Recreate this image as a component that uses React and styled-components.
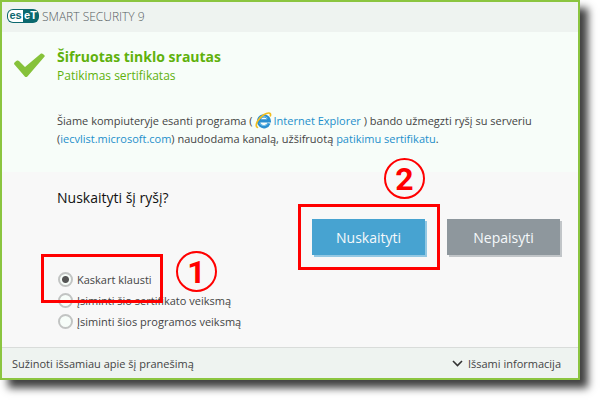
import React, { useState } from 'react'
import styled, { createGlobalStyle } from 'styled-components'

const GlobalStyle = createGlobalStyle`
  * {
    box-sizing: border-box;
  }
  body {
    margin: 0;
    background: #ffffff;
    font-family: 'Open Sans', 'Noto Sans', sans-serif;
    font-size: 11px;
    color: #444444;
  }
`;

const Page = styled.div`
  padding: 0 20px 20px 0;
`;

const Dialog = styled.main`
  border: 2px solid #8bc540;
  background: #f8f8f8;
  box-shadow: 8px 8px 8px rgba(0, 0, 0, 0.75);
`;

const Header = styled.header`
  display: flex;
  align-items: center;
  gap: 3px;
  height: 30px;
  padding: 0 5px 2px;
  background: #eef3f0;
`;

const Logo = styled.span`
  display: flex;
  width: 32px;
  height: 14px;
  padding: 1px;
  overflow: hidden;
  border-radius: 6px;
  background: #0b686e;
  font-family: 'Liberation Sans', sans-serif;
  font-size: 11px;
  font-weight: bold;
  line-height: 11px;
`;

const LogoHalf = styled.span`
  flex: 1;
  border-radius: ${props => props.$light ? '5px 0 0 5px' : '0 5px 5px 0'};
  background: ${props => props.$light ? '#ffffff' : '#0b686e'};
  color: ${props => props.$light ? '#0b686e' : '#ffffff'};
  text-align: center;
`;

const Product = styled.span`
  font-size: 12px;
  font-weight: 300;
  color: #555c60;
`;

const Notice = styled.section`
  display: flex;
  align-items: flex-start;
  gap: 12px;
  min-height: 140px;
  padding: 15px 20px 22px 12px;
  background: #f7fdf9;
`;

const Tick = styled.svg`
  flex: none;
  margin-top: 6px;
`;

const Title = styled.h1`
  margin: 0;
  font-size: 14px;
  line-height: 20px;
  font-weight: bold;
  color: #5fb10c;
`;

const Subtitle = styled.p`
  margin: 0 0 27px;
  font-size: 12px;
  line-height: 18px;
  color: #5fb10c;
`;

const Message = styled.p`
  margin: 0;
  line-height: 18px;
`;

const Link = styled.a`
  color: #1d8fcb;
  text-decoration: none;
`;

const BrowserIcon = styled.svg`
  margin: 0 2px;
  vertical-align: -4px;
`;

const Ask = styled.section`
  display: grid;
  grid-template-columns: 1fr auto;
  align-content: space-between;
  min-height: 175px;
  padding: 15px 18px 15px 55px;
`;

const Question = styled.h2`
  margin: 0;
  font-size: 14px;
  line-height: 22px;
  font-weight: normal;
  color: #111111;
`;

const Actions = styled.div`
  display: flex;
  gap: 22px;
  padding-top: 32px;
`;

const Marked = styled.div`
  position: relative;
`;

const Action = styled.button`
  width: 113px;
  height: 36px;
  padding: 0;
  border: none;
  background: ${props => props.$primary ? '#47a3d1' : '#8e979d'};
  box-shadow: 2px 2px 0 ${props => props.$primary ? '#93c8e3' : '#c1c5c8'};
  font-family: inherit;
  font-size: 14px;
  color: #f5f9fb;
  cursor: pointer;
`;

const Options = styled.fieldset`
  margin: 0;
  padding: 0 0 0 1px;
  border: none;
`;

const Option = styled.label`
  display: flex;
  align-items: center;
  gap: 4px;
  height: 21px;
`;

const Radio = styled.input`
  appearance: none;
  width: 15px;
  height: 15px;
  margin: 0;
  border: 2px solid #c2c4c3;
  border-radius: 50%;
  background: #f7fdf9;
  &:checked {
    background: radial-gradient(circle, #555555 3px, #f7fdf9 4px);
  }
`;

// red marks that lie over the dialog
const Frame = styled.span`
  position: absolute;
  top: ${props => props.$top};
  left: ${props => props.$left};
  width: ${props => props.$width};
  height: ${props => props.$height};
  border: 3px solid #ff0000;
  pointer-events: none;
`;

const Step = styled.span`
  position: absolute;
  top: ${props => props.$top};
  left: ${props => props.$left};
  width: 41px;
  height: 41px;
  border: 2px solid #ff0000;
  border-radius: 50%;
  font-family: Roboto, 'Liberation Sans', sans-serif;
  font-size: 32px;
  font-weight: bold;
  line-height: 38px;
  text-align: center;
  color: #ff0000;
`;

const Footer = styled.footer`
  display: flex;
  align-items: center;
  justify-content: space-between;
  height: 31px;
  padding: 0 17px 0 10px;
  border-top: 1px solid #d9dcda;
  background: #eef3f0;
`;

const FooterLink = styled.a`
  color: inherit;
  text-decoration: none;
`;

const Details = styled.button`
  display: flex;
  align-items: center;
  gap: 5px;
  padding: 0;
  border: none;
  background: none;
  font: inherit;
  color: inherit;
`;

const OPTIONS = [
  { id: 'ask', label: 'Kaskart klausti' },
  { id: 'certificate', label: 'Įsiminti šio sertifikato veiksmą' },
  { id: 'program', label: 'Įsiminti šios programos veiksmą' },
]

const ExplorerIcon = () => (
  <BrowserIcon width="17" height="17" viewBox="0 0 17 17" aria-hidden="true">
    <path d="M14 11.2 A5.4 5.4 0 1 1 14.3 8.8 H5" fill="none" stroke="#2a8fd0" strokeWidth="3.2" />
    <path d="M13.2 11.2 A5 5 0 0 1 4.4 10.8 M4.8 6.8 A5 5 0 0 1 12.6 6.2" fill="none" stroke="#7cc8ef" strokeWidth="1" />
    <path d="M2.4 15.4 C-0.8 13.4 3.6 5.8 8.8 2.7 C12.4 0.5 16.4 0 15.4 3.8" fill="none" stroke="#f3bd1d" strokeWidth="1.7" strokeLinecap="round" />
  </BrowserIcon>
)

const App = () => {
  const [choice, setChoice] = useState('ask')

  return (
    <Page>
      <GlobalStyle />
      <Dialog>
        <Header>
          <Logo>
            <LogoHalf $light>es</LogoHalf>
            <LogoHalf>eT</LogoHalf>
          </Logo>
          <Product>SMART SECURITY 9</Product>
        </Header>
        <Notice>
          <Tick width="31" height="24" viewBox="0 0 31 24" aria-hidden="true">
            <path d="M0 11 Q0 10 1 9 L3 7.6 Q4 7 5 8 L11 14 L27 0.6 Q28 0 29 1 L30.6 2.4 Q31 3 30.4 3.8 L13.4 23.4 Q12 24.6 10.8 23.4 Z" fill="#86c23a" />
          </Tick>
          <div>
            <Title>Šifruotas tinklo srautas</Title>
            <Subtitle>Patikimas sertifikatas</Subtitle>
            <Message>
              Šiame kompiuteryje esanti programa (<ExplorerIcon />
              <Link href="#explorer">Internet Explorer</Link> ) bando užmegzti ryšį su serveriu
              {' '}(<Link href="#server">iecvlist.microsoft.com</Link>) naudodama kanalą, užšifruotą{' '}
              <Link href="#certificate">patikimu sertifikatu</Link>.
            </Message>
          </div>
        </Notice>
        <Ask>
          <Question>Nuskaityti šį ryšį?</Question>
          <Actions>
            <Marked>
              <Action type="button" $primary>Nuskaityti</Action>
              <Frame $top="-15px" $left="-14px" $width="142px" $height="66px" />
              <Step $top="-61px" $left="72px">2</Step>
            </Marked>
            <Action type="button">Nepaisyti</Action>
          </Actions>
          <Marked>
            <Options aria-label="Nuskaityti šį ryšį?">
              {OPTIONS.map(option => (
                <Option key={option.id} htmlFor={option.id}>
                  <Radio
                    type="radio"
                    name="choice"
                    id={option.id}
                    checked={choice === option.id}
                    onChange={() => setChoice(option.id)}
                  />
                  {option.label}
                </Option>
              ))}
            </Options>
            <Frame $top="-15px" $left="-16px" $width="122px" $height="49px" />
            <Step $top="-18px" $left="119px">1</Step>
          </Marked>
        </Ask>
        <Footer>
          <FooterLink href="#about">Sužinoti išsamiau apie šį pranešimą</FooterLink>
          <Details type="button">
            <svg width="11" height="7" viewBox="0 0 11 7" aria-hidden="true">
              <path d="M1 1 L5.5 5.5 L10 1" fill="none" stroke="#333333" strokeWidth="1.6" />
            </svg>
            Išsami informacija
          </Details>
        </Footer>
      </Dialog>
    </Page>
  )
}

export default App
